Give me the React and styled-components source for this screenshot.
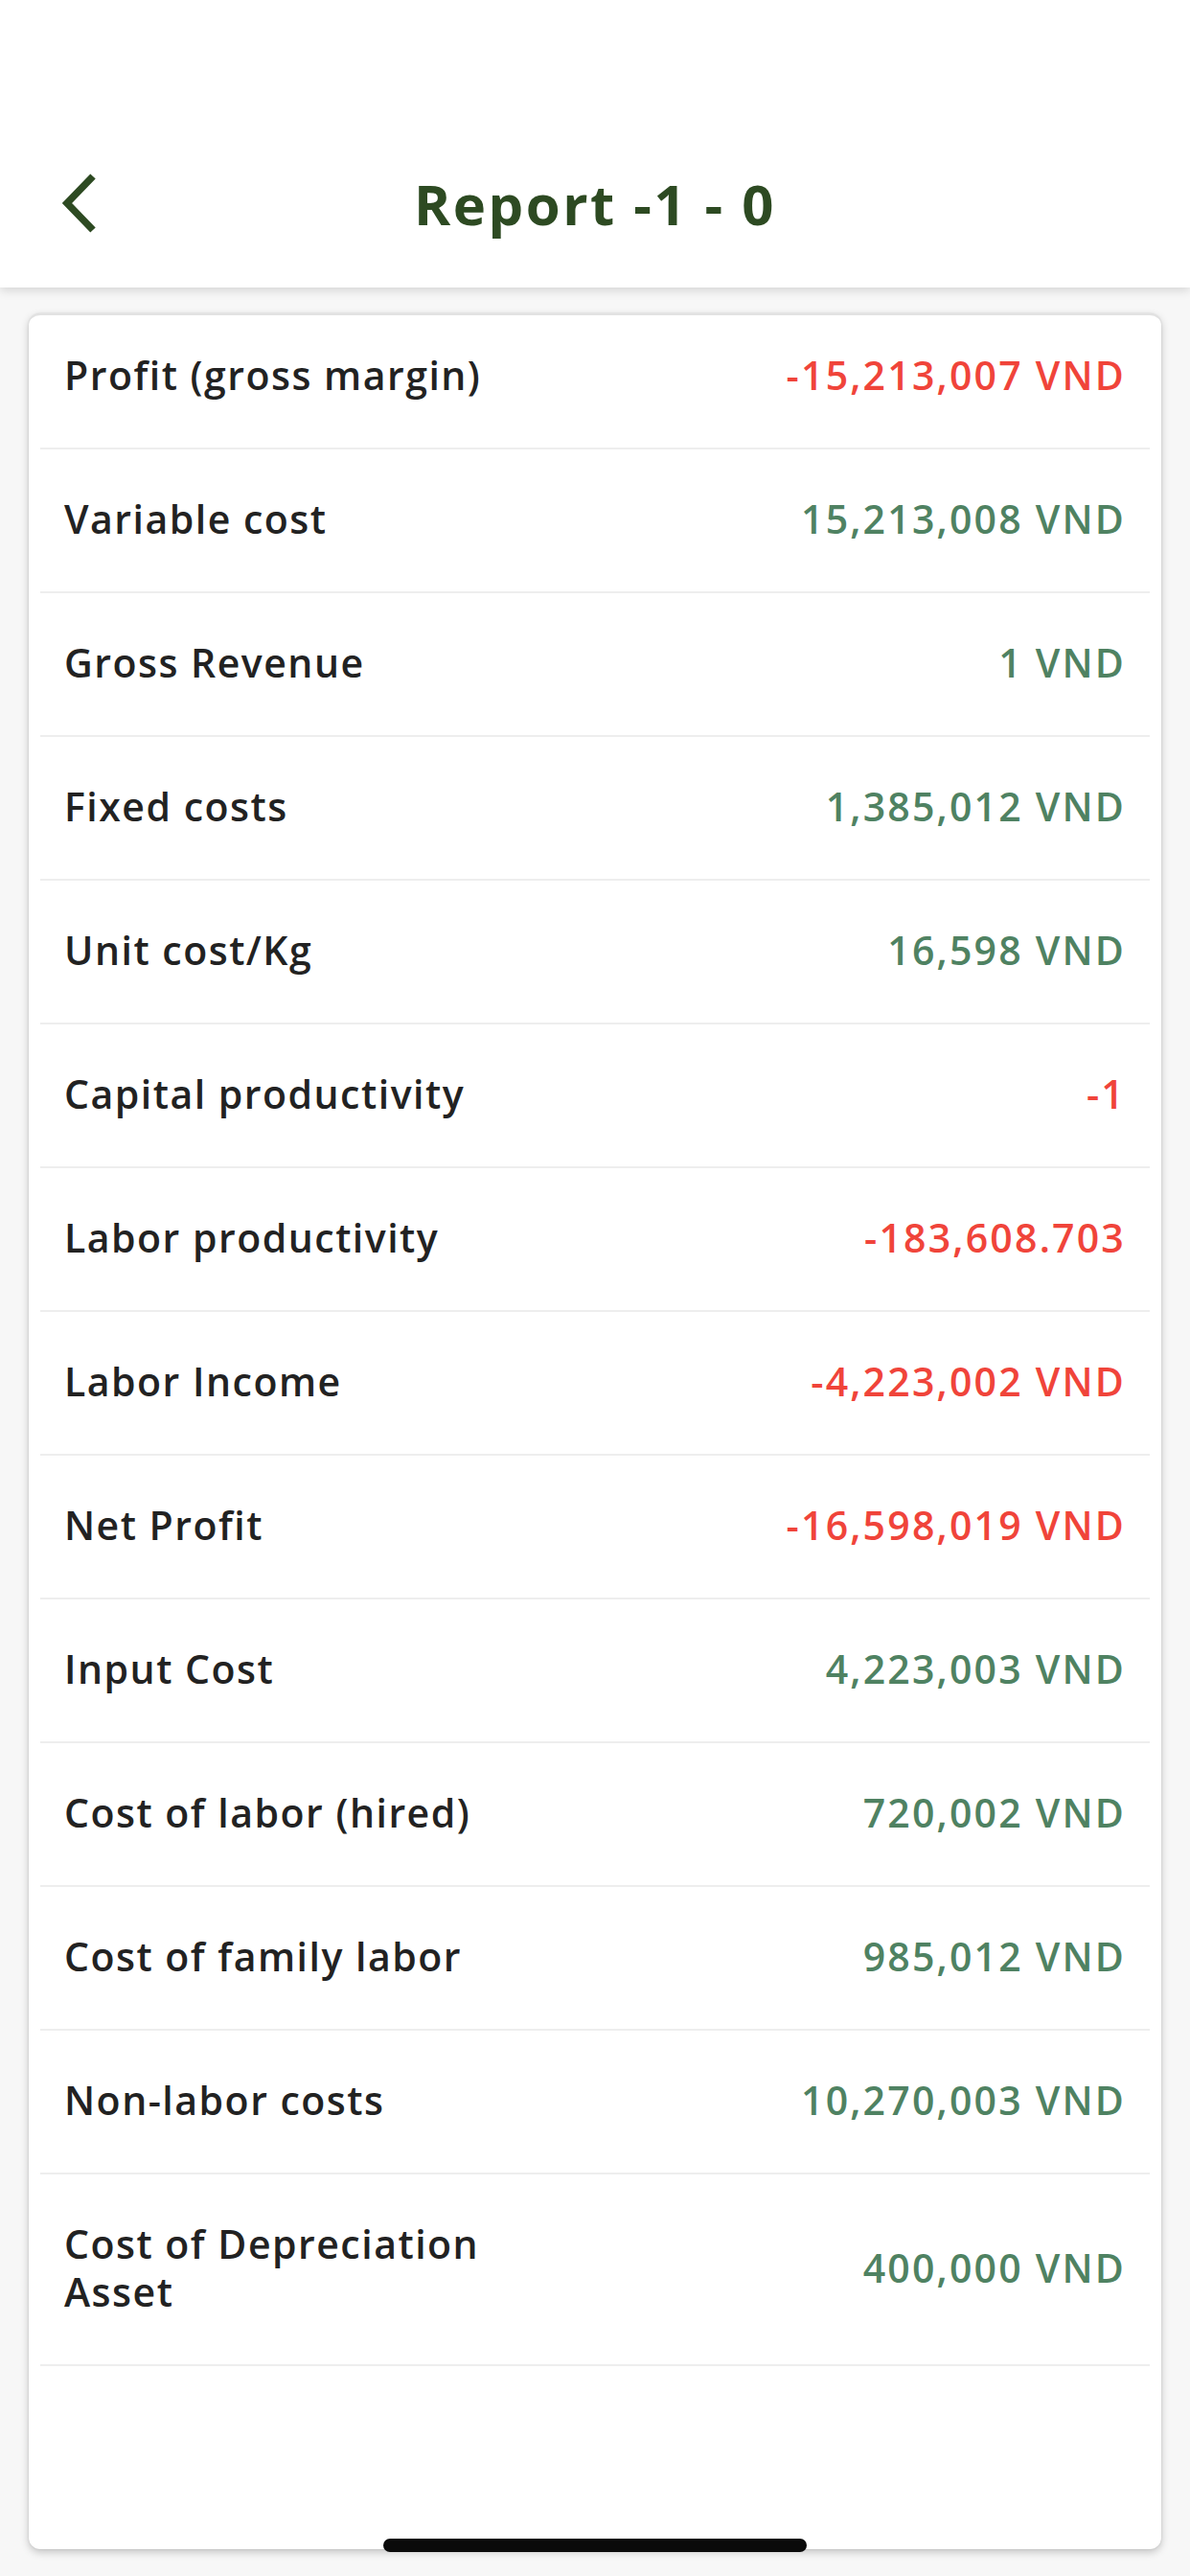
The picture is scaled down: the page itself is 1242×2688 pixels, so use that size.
import React from "react";
import styled, { createGlobalStyle } from "styled-components";

const GlobalStyle = createGlobalStyle`
  html, body {
    margin: 0;
    padding: 0;
    background: #f7f7f7;
    font-family: "Open Sans", "Noto Sans", sans-serif;
    -webkit-font-smoothing: antialiased;
  }
  * { box-sizing: border-box; }
`;

const Page = styled.div`
  display: flex;
  flex-direction: column;
  height: 100vh;
  background: #f7f7f7;
  position: relative;
`;

const Header = styled.header`
  height: 300px;
  flex-shrink: 0;
  background: #ffffff;
  box-shadow: 0 3px 10px rgba(0, 0, 0, 0.14);
  display: flex;
  align-items: flex-end;
  position: relative;
  z-index: 2;
`;

const NavBar = styled.div`
  height: 174px;
  width: 100%;
  display: grid;
  grid-template-columns: 160px 1fr 160px;
  align-items: center;
  padding-bottom: 2px;
`;

const BackButton = styled.button`
  border: none;
  background: none;
  padding: 0 0 0 62px;
  display: flex;
  align-items: center;
  height: 80px;
  cursor: pointer;
`;

const Title = styled.h1`
  margin: 0;
  text-align: center;
  font-size: 58px;
  font-weight: 700;
  color: #2d4a22;
  letter-spacing: 2.5px;
`;

const Main = styled.main`
  flex: 1;
  display: flex;
  padding: 27px 30px 28px;
  min-height: 0;
`;

const Card = styled.section`
  flex: 1;
  background: #ffffff;
  border-radius: 12px;
  border-top: 2px solid #e2e2e2;
  box-shadow: 0 3px 8px rgba(0, 0, 0, 0.22), 0 0 2px rgba(0, 0, 0, 0.12);
  padding: 0 12px;
  overflow: hidden;
`;

const Row = styled.div`
  display: flex;
  align-items: center;
  justify-content: space-between;
  padding: ${(p) => (p.$first ? "37px 25px 51px" : "47px 25px 51px")};
  border-bottom: 2px solid #eeeeee;
`;

const Label = styled.span`
  font-size: 41px;
  line-height: 50px;
  font-weight: 600;
  letter-spacing: 1.5px;
  color: #222222;
  max-width: 500px;
`;

const Value = styled.span`
  font-size: 41px;
  line-height: 50px;
  font-weight: 600;
  letter-spacing: 2.2px;
  color: ${(p) => (p.$negative ? "#f0443a" : "#4f8262")};
  text-align: right;
  white-space: nowrap;
`;

const HomeIndicator = styled.div`
  position: absolute;
  left: 50%;
  bottom: 25px;
  transform: translateX(-50%);
  width: 442px;
  height: 14px;
  border-radius: 7px;
  background: #0a0a0a;
  z-index: 3;
`;

const rows = [
  ["Profit (gross margin)", "-15,213,007 VND"],
  ["Variable cost", "15,213,008 VND"],
  ["Gross Revenue", "1 VND"],
  ["Fixed costs", "1,385,012 VND"],
  ["Unit cost/Kg", "16,598 VND"],
  ["Capital productivity", "-1"],
  ["Labor productivity", "-183,608.703"],
  ["Labor Income", "-4,223,002 VND"],
  ["Net Profit", "-16,598,019 VND"],
  ["Input Cost", "4,223,003 VND"],
  ["Cost of labor (hired)", "720,002 VND"],
  ["Cost of family labor", "985,012 VND"],
  ["Non-labor costs", "10,270,003 VND"],
  ["Cost of Depreciation Asset", "400,000 VND"],
];

const ChevronLeft = () => (
  <svg width="40" height="62" viewBox="0 0 40 62" fill="none">
    <path d="M35 3 L8 31 L35 59" stroke="#2d4a22" strokeWidth="7.5" strokeLinecap="butt" strokeLinejoin="miter" />
  </svg>
);

export default function App() {
  return (
    <>
      <GlobalStyle />
      <Page>
        <Header>
          <NavBar>
            <BackButton aria-label="Back">
              <ChevronLeft />
            </BackButton>
            <Title>Report -1 - 0</Title>
            <div />
          </NavBar>
        </Header>
        <Main>
          <Card>
            {rows.map(([label, value], i) => (
              <Row key={label} $first={i === 0}>
                <Label>{label}</Label>
                <Value $negative={value.startsWith("-")}>{value}</Value>
              </Row>
            ))}
          </Card>
        </Main>
        <HomeIndicator />
      </Page>
    </>
  );
}
